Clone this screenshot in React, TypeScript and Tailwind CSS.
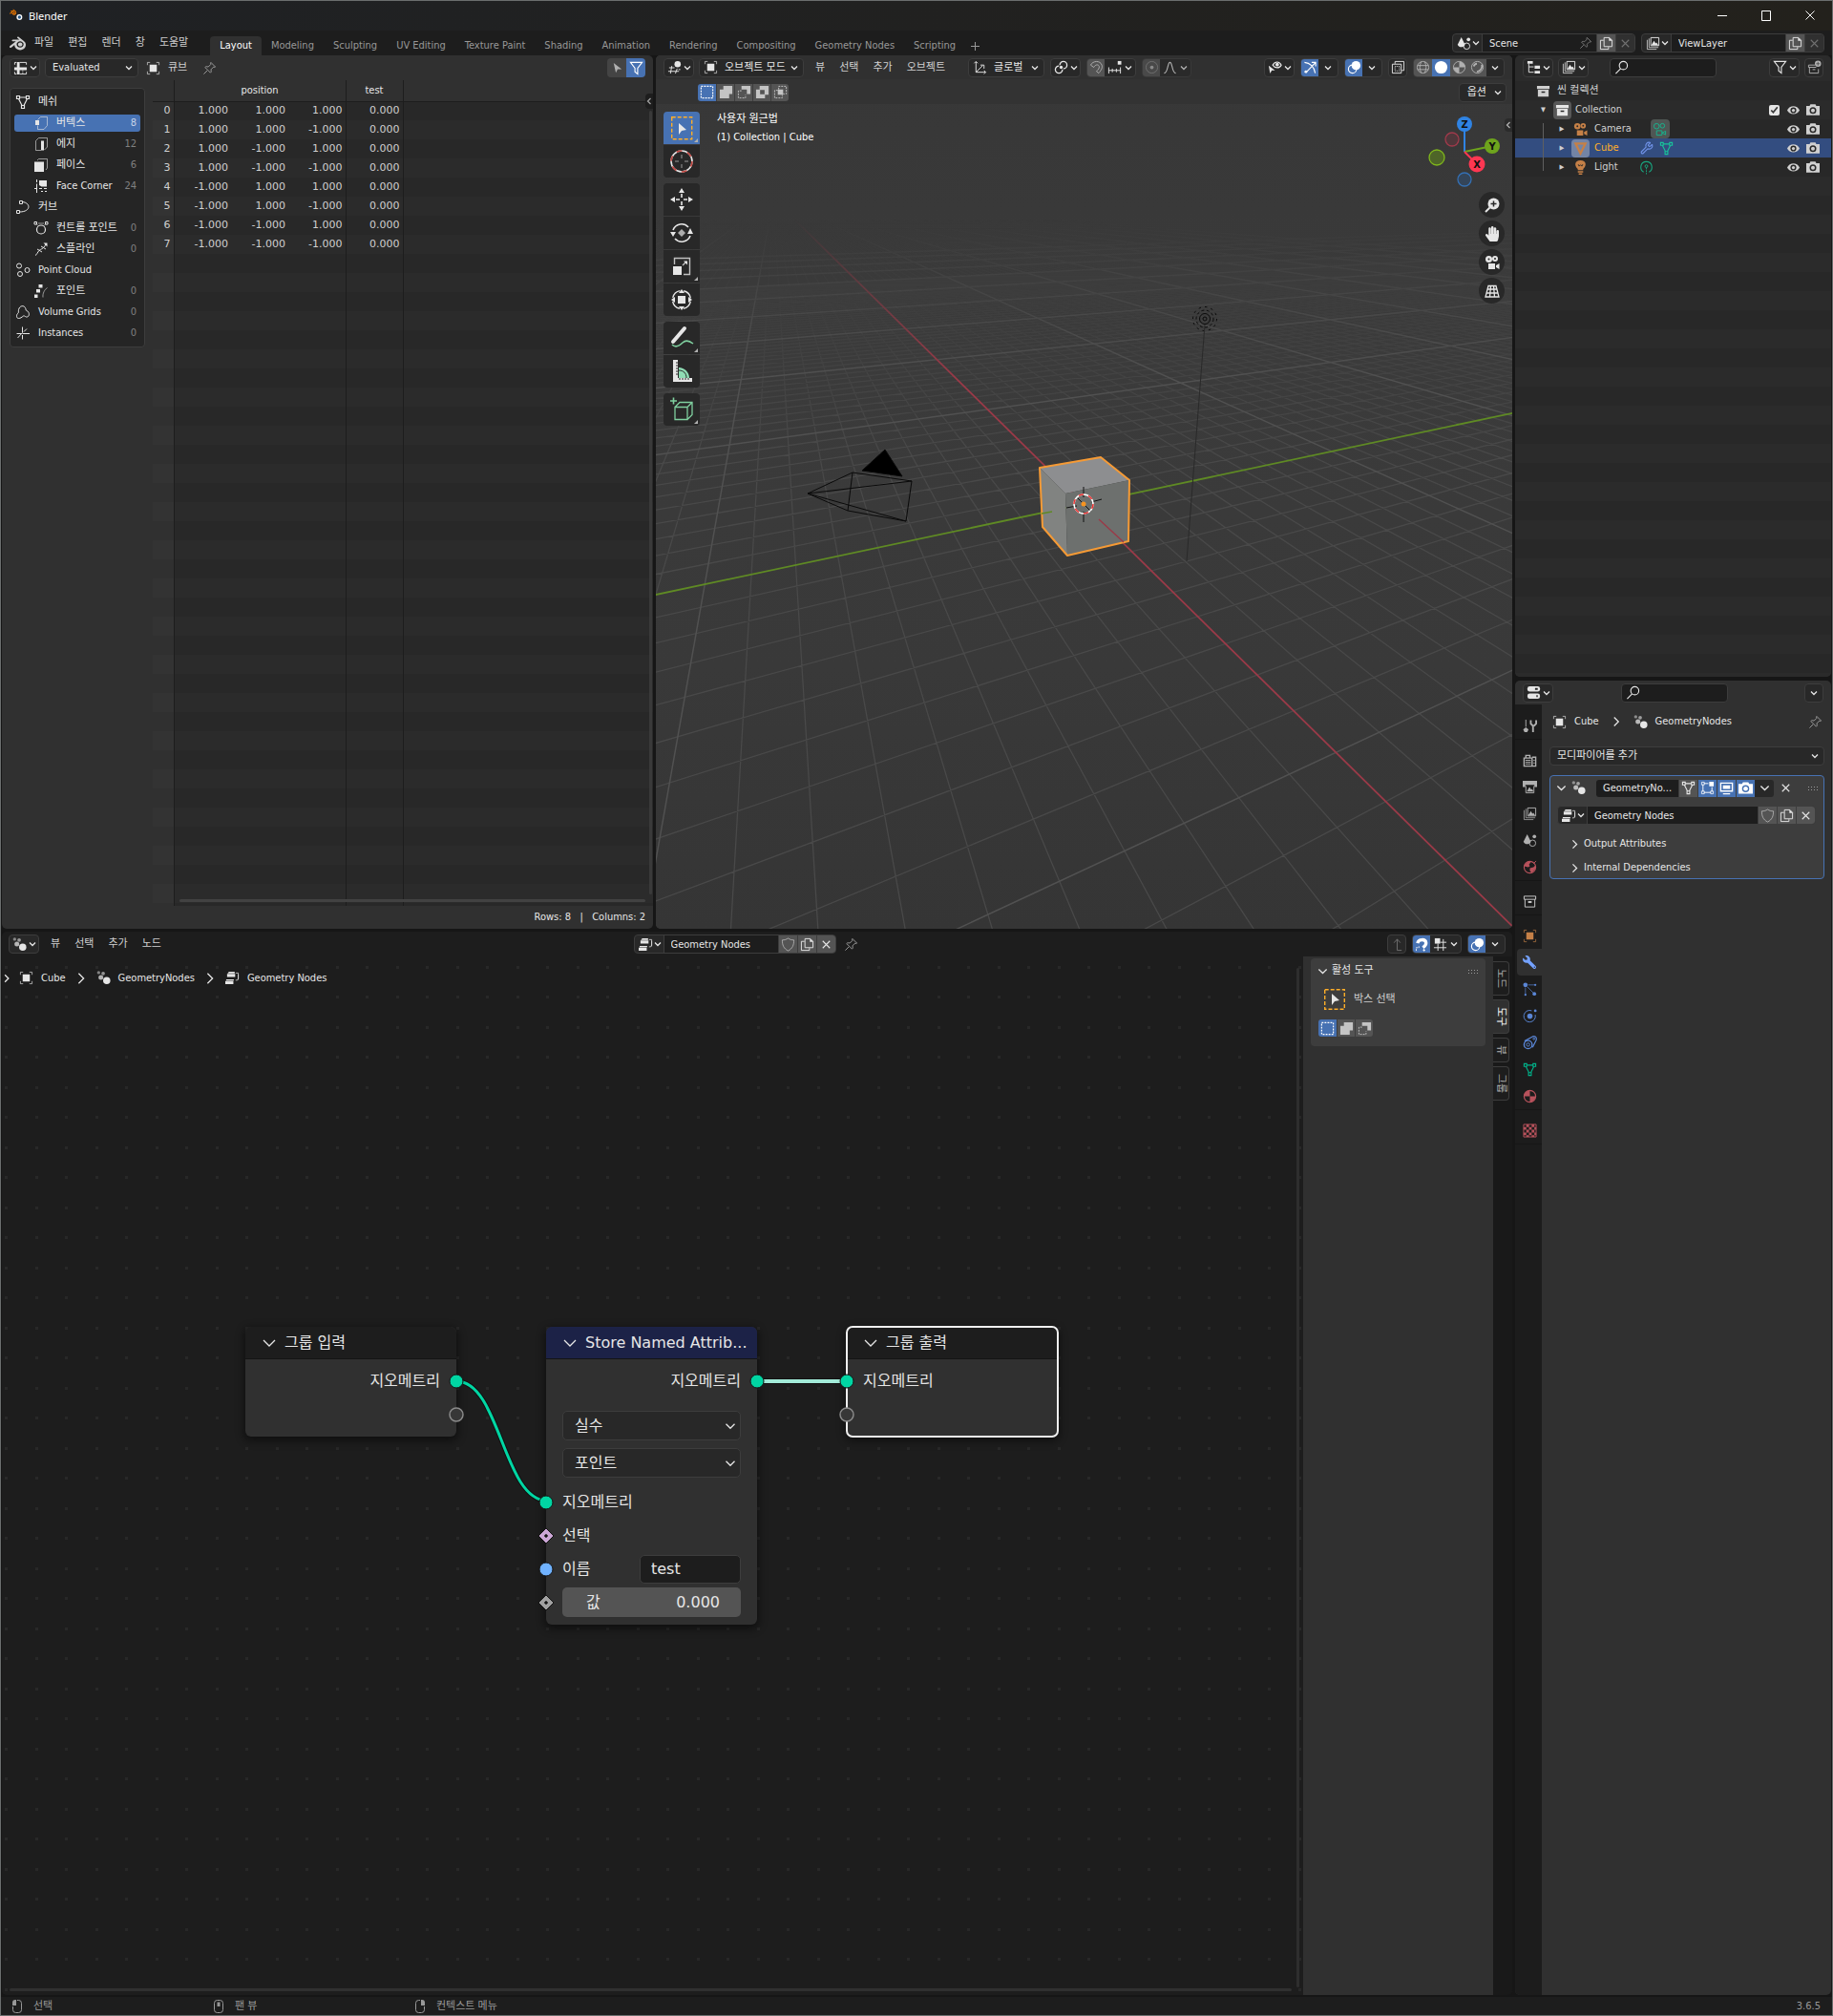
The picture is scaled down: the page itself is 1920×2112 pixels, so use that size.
import type { ReactNode } from "react";
import clsx from "clsx";
import { SiBlender } from "react-icons/si";
import { FaWrench, FaHandPaper } from "react-icons/fa";
import { Wrench } from "lucide-react";

const solid = { fill: "currentColor", stroke: "none" };

const icons: Record<string, ReactNode> = {
    sheet: (
        <>
            <path d="M1.5 4V1.5h2M7 1.5h7.5V4M14.5 12v2.5H7M3.5 14.5h-2V12" />
            <path d="M5.5 1v14M1 8.5h14" strokeWidth="3" />
            <path d="M10.5 9v5" strokeDasharray="1 1" />
        </>
    ),
    object: (
        <>
            <path d="M1.5 4.5v-3h3M11.5 1.5h3v3M14.5 11.5v3h-3M4.5 14.5h-3v-3" opacity=".7" />
            <rect x="4" y="4" width="8" height="8" {...solid} />
        </>
    ),
    pin: <path d="M9.5 1.5l5 5-1 .5-1-.5-3 3c.6 1.6.5 2.8-.5 3.5L3 7c.7-1 2-1.1 3.5-.5l3-3-.5-1zM5.5 10.5l-4 4" />,
    funnel: <path d="M1.5 1.5h13L9.5 8v6.5L6.5 12V8z" strokeWidth="1.2" />,
    cursor: <path d="M4 2l9 7H8.5l-2 4z" {...solid} />,
    mesh: (
        <>
            <path d="M1.5 1.5h3v3h-3zM11.5 1.5h3v3h-3zM6.5 11.5h3v3h-3z" strokeWidth="1.2" />
            <path d="M4.5 3h7M3.5 4.5l3.5 7M12.500 4.5l-3.5 7" strokeWidth="1.2" />
        </>
    ),
    vertex: (
        <>
            <path d="M4.5 4.5l3-3h7v9L11 14.5H4.500v-4" opacity=".6" />
            <rect x="2" y="5" width="4" height="5" {...solid} />
        </>
    ),
    edge: (
        <>
            <path d="M8 14.5H2.5v-10l3-3h9V11l-3 3" opacity=".6" />
            <path d="M9.5 4.5v10" strokeWidth="3" />
        </>
    ),
    face: (
        <>
            <path d="M4 3l1.5-1.5h9V11L13 13" opacity=".6" />
            <rect x="1" y="4.5" width="10" height="10.5" {...solid} />
        </>
    ),
    corner: (
        <>
            <path d="M3.5 1v3M3.5 5.5V15M1 10.5h3M6 10.5h3M11 10.5h3M8 13.5h2M12 13.5h2" />
            <path d="M6 2h8v6.500H8.500L6 7z" {...solid} />
        </>
    ),
    curve: (
        <>
            <path d="M4.5 1.5h3v3h-3zM1.5 11.5h3v3h-3z" />
            <path d="M7.5 2.5c9 1 9 10.500-3 10.500" />
        </>
    ),
    control: (
        <>
            <circle cx="8" cy="9.5" r="4.5" strokeWidth="1.2" />
            <path d="M3 3.5l2 2M13 3.5l-2 2M5 3h6" opacity=".6" />
            <path d="M1 1.5h2.500V4H1zM12.500 1.5H15V4h-2.500z" />
        </>
    ),
    spline: (
        <>
            <path d="M2 14.5c2-1 2-3 4-5s4-1 7-6.500M4 8l5 3M8 5l5 3" />
            <path d="M10.5 1.5h4v4z" {...solid} />
        </>
    ),
    cloud: (
        <>
            <circle cx="4" cy="3.5" r="2.5" />
            <circle cx="12.5" cy="8" r="2.5" />
            <circle cx="5" cy="12" r="2.5" />
        </>
    ),
    points: (
        <>
            <path d="M5.5 1h4v3.500h-4zM3 6h4v3.500H3zM1 11.500h3.500V15H1z" {...solid} />
            <path d="M14.5 4.5c-3 2-5 6-4.500 10" opacity=".6" />
        </>
    ),
    volume: <path d="M3.5 14.5C1 14.5 1 11 2.5 9.5c1.500-1 .5-2 1-4C4.500 1 9 .5 10.500 3.500c1 1.500 0 2.500 1.500 3 3.500 1.500 3 7-.5 6.500-1.500-.5-2-1.500-3-1-2 1.500-3 2.500-5 2.500z" />,
    instances: <path d="M7.5 1.5v6L2.500 13M7.5 8.5H15M7.5 10v4.500M1.5 8.5H6M9 6.500l3-3" />,
    viewport: (
        <>
            <path d="M5 6.500L3.500 15M11 9.500L9 15M2 8.500h6M1 12.500h12" />
            <circle cx="11.5" cy="4.5" r="3.5" {...solid} />
            <path d="M12.5 10.5h2" />
        </>
    ),
    axes: (
        <>
            <path d="M3.5 13.5V2M3.5 13.5H14M3.5 13.500L11 6M1.500 3.500l2-2 2 2M12.500 11.500l2 2-2 2" />
            <path d="M8.5 5.500h4v4" />
        </>
    ),
    pivot: (
        <>
            <path d="M5.500 6.500a4 4 0 1 0 4 4M6.500 5.500a4 4 0 1 1 4 4" strokeWidth="1.400" />
            <circle cx="8" cy="8" r="1.8" {...solid} />
        </>
    ),
    magnet: <path d="M1.500 5.500C4 .5 12 0 14 5.500c1 3-.5 5.500-3.500 9L8 12.500c2-2 3.500-3.500 3-5.500-.7-2.500-4-2.500-6 1z" />,
    magnetOn: (
        <>
            <path d="M3 6.500C4 1.500 12 1.500 12.500 6c.3 2.500-1.500 4-3.500 5.500" strokeWidth="3.500" />
            <path d="M9.500 13.500l1.500 1.500" strokeWidth="2" />
            <path d="M1.500 15v-3.500h3V9" strokeDasharray="2 1" />
        </>
    ),
    increment: (
        <>
            <path d="M1.5 8v7M14.5 8v7M1 11.5h14M5.500 9.500v4M10 9.500v4" />
            <rect x="11.5" y="1" width="4" height="4" {...solid} />
        </>
    ),
    gridSnap: (
        <>
            <path d="M5.500 7v8M11.500 2v13M1 11.500h14M8 5.500h7" />
            <rect x="2" y="1" width="6" height="6" {...solid} />
        </>
    ),
    proportional: (
        <>
            <circle cx="8" cy="8" r="6.5" opacity=".6" />
            <circle cx="8" cy="8" r="2" {...solid} />
        </>
    ),
    falloff: <path d="M1.500 14.500C6 14.500 5 2.500 8 2.500s2 12 6.500 12" strokeWidth="1.200" />,
    visibility: (
        <>
            <path d="M5.500 5.500C8 1 13 1 15 5.500c-2 4-7 4-9.500 0z" strokeWidth="1.300" />
            <circle cx="10.5" cy="5" r="2" {...solid} />
            <path d="M1 6l7 5.500H4.500L2.500 15z" {...solid} />
        </>
    ),
    gizmo: (
        <>
            <path d="M1.500 2.500c6 .5 11 5 12 12M3 14L13.500 3M9.500 2.500H14V7" strokeWidth="1.200" />
            <circle cx="3" cy="13" r="1.5" {...solid} />
        </>
    ),
    overlay: (
        <>
            <circle cx="10" cy="6" r="5" {...solid} />
            <circle cx="6" cy="10" r="4.5" strokeWidth="1.200" />
        </>
    ),
    xray: (
        <>
            <path d="M1.500 4.500h10v10h-10zM4.500 4V1.500h10v10H12" />
            <path d="M4.500 7h5v5h-5z" strokeDasharray="1 1" />
        </>
    ),
    wire: (
        <>
            <circle cx="8" cy="8" r="6.5" />
            <path d="M2 6h12M2 10.500h12M6 2c-2 4-2 8 0 12M10 2c2 4 2 8 0 12" />
        </>
    ),
    solidShade: <circle cx="8" cy="8" r="7" {...solid} />,
    material: (
        <>
            <circle cx="8" cy="8" r="6.5" />
            <path d="M8 1.500V8h6.500C14.500 4 11.500 1.500 8 1.500zM8 8v6.500C5 14.500 2 12 1.500 8z" {...solid} />
        </>
    ),
    materialTab: (
        <>
            <circle cx="8" cy="8" r="6.5" strokeWidth="1.300" />
            <path d="M8 1.500V8H1.500C1.500 4 4.500 1.500 8 1.500zM8 8v6.500c3 0 6-2.500 6.500-6.500z" {...solid} />
        </>
    ),
    rendered: (
        <>
            <circle cx="8" cy="8" r="6.5" />
            <path d="M4 7c.5-2 2-3 3.500-3M13 5c1 4-1.500 7-5.500 8" strokeWidth="2" />
        </>
    ),
    scene: (
        <>
            <path d="M5 1l4 8c0 4-8 4-8 0z" {...solid} />
            <circle cx="11" cy="11" r="3.5" />
            <circle cx="13" cy="3.5" r="2" {...solid} />
        </>
    ),
    layers: (
        <>
            <path d="M1.500 4v10.500H12M3.500 2.500v10H14" opacity=".8" />
            <path d="M5.500 1.500h9v9h-9z" />
            <path d="M6 10l3-5 2 3 1-1 2 3z" {...solid} />
        </>
    ),
    copy: (
        <>
            <path d="M5 4.500H1.500v10h9V12" />
            <path d="M5.500 1.500h6l3 3v7h-9z" />
            <path d="M11 1v4h4z" {...solid} />
        </>
    ),
    close: <path d="M4 4l8 8M12 4l-8 8" strokeWidth="1.200" />,
    outliner: (
        <>
            <path d="M2.500 4v9.500H8M2.500 7.500H8" />
            <path d="M1 1h6v3H1zM9 6h6v3.500H9zM9 12h6v3H9z" {...solid} />
        </>
    ),
    search: (
        <>
            <circle cx="10" cy="6" r="4.5" strokeWidth="1.200" />
            <path d="M7 9.500L1.500 15" strokeWidth="1.200" />
        </>
    ),
    newCollection: (
        <>
            <path d="M1.500 5.500h7M2.500 8v6.500h10V10M1.500 5.500V8H10M6 10.500h3" />
            <circle cx="12" cy="4" r="3.5" {...solid} />
            <path d="M12 2v4M10 4h4" stroke="#545454" />
        </>
    ),
    collection: (
        <>
            <path d="M1 2h14v3.500H1zM2 6.500h12V14H2z" {...solid} />
            <path d="M6 9h4" stroke="#282828" strokeWidth="1.500" />
        </>
    ),
    collectionLine: (
        <>
            <path d="M1.500 2h13v3.500h-13zM2.500 5.500V14h11V5.500" />
            <path d="M6 8.500h4" strokeWidth="2" />
        </>
    ),
    movie: (
        <>
            <circle cx="4.5" cy="4.5" r="3.5" {...solid} />
            <circle cx="11" cy="4" r="3" {...solid} />
            <path d="M4 9h7v6H4zM12 11l3.500-2v6L12 13z" {...solid} />
            <circle cx="4.5" cy="4.5" r="1" fill="#282828" stroke="none" />
            <circle cx="11" cy="4" r="1" fill="#282828" stroke="none" />
        </>
    ),
    movieLine: (
        <>
            <circle cx="4.5" cy="4.5" r="3" />
            <circle cx="11" cy="4" r="2.5" />
            <path d="M4.500 9.500h6v5h-6zM10.500 12l4-2v4z" />
        </>
    ),
    triangle: <path d="M2.500 2.500h11L8 13.500z" strokeWidth="2.500" />,
    bulb: (
        <>
            <path d="M8 0C1 0 1 6.500 5 9.500V11h6V9.500C15 6.500 15 0 8 0zM5 12h6v1.500H5zM6 14.500h4V16H6z" {...solid} />
            <path d="M5.500 4.500l1 2L8 5l1.500 1.500 1-2" stroke="#282828" />
        </>
    ),
    pointLight: (
        <>
            <path d="M5 13C0 10.500 1 1.500 8 1.500s8 9 3 11.500" strokeWidth="1.200" />
            <path d="M8 8v7.500" strokeDasharray="2 1" />
            <circle cx="8" cy="6.5" r="1.5" />
        </>
    ),
    eye: (
        <>
            <path d="M0 8c3-7 13-7 16 0-3 6.500-13 6.500-16 0z" {...solid} />
            <circle cx="8" cy="8" r="3.8" fill="#282828" stroke="none" />
            <circle cx="8" cy="8" r="2" {...solid} />
        </>
    ),
    camera: (
        <>
            <path d="M0 3.500h4l1-2h6l1 2h4v11H0z" {...solid} />
            <circle cx="8" cy="8.8" r="4" fill="#282828" stroke="none" />
            <circle cx="8" cy="8.8" r="2.3" {...solid} />
        </>
    ),
    cameraOn: (
        <>
            <path d="M0 3.500h4l1-2h6l1 2h4v11H0z" {...solid} />
            <circle cx="8" cy="8.8" r="4" fill="#4772b3" stroke="none" />
            <circle cx="8" cy="8.8" r="2.5" {...solid} />
        </>
    ),
    properties: (
        <>
            <rect x="1" y="1" width="14" height="6" rx="2.5" {...solid} />
            <rect x="1" y="9" width="14" height="6" rx="2.5" {...solid} />
            <path d="M9.500 4h3M11 12h1.500" stroke="#282828" strokeWidth="2" />
        </>
    ),
    tool: (
        <>
            <path d="M3.500 1v8" />
            <path d="M9 1.500v4L11.500 8v7M15 1.500v4L12.500 8" strokeWidth="2" />
            <path d="M3.500 9.500L6.500 12 5 15H2l-1.500-3z" {...solid} />
        </>
    ),
    render: (
        <>
            <path d="M1.500 5.500h9v9h-9zM3.500 5V2.500H8V5M10.500 4.500h4v10h-4" strokeWidth="1.500" />
            <path d="M3 8h6M3 10h6M3 12h6M12 8h1.500M12 11h1.500" />
        </>
    ),
    output: (
        <>
            <path d="M0 1h16v7h-3V5.500H3V8H0z" {...solid} />
            <path d="M3.500 7v7.500h9V7" />
            <path d="M4.500 13l3-5 2 3 1-1 1.500 3z" {...solid} />
        </>
    ),
    world: (
        <>
            <circle cx="8" cy="8" r="6.5" strokeWidth="1.200" />
            <path d="M2 5l4-3.500 3 1L7 5l1 2-2 1-4-1zM8 9l4-1 2-2v4l-4 4.500L8 12zM13 2l2-1" {...solid} />
            <path d="M12 4l3-3" />
        </>
    ),
    particles: (
        <>
            <circle cx="3" cy="3" r="2.5" {...solid} />
            <circle cx="14" cy="3" r="1.2" {...solid} />
            <circle cx="3" cy="14" r="1.2" {...solid} />
            <circle cx="13" cy="13" r="2" {...solid} />
            <path d="M6 3h8M3 6v8M5 5l8 8" opacity=".7" />
        </>
    ),
    physics: (
        <>
            <path d="M10 2A6.500 6.500 0 1 0 14 6.500" />
            <circle cx="8" cy="8" r="3" {...solid} />
            <circle cx="14" cy="2" r="1.5" {...solid} />
        </>
    ),
    constraint: (
        <>
            <path d="M2 6l9-5c3-1 5 1 4 4l-4 8" strokeWidth="1.300" />
            <circle cx="6" cy="10" r="4.5" strokeWidth="1.500" />
            <circle cx="6" cy="10" r="1.8" />
            <circle cx="12.5" cy="3.5" r="1" />
        </>
    ),
    texture: (
        <>
            <path d="M1 1h14v14H1z" />
            <path d="M4 1h3v3H4zM10 1h3v3h-3zM1 4h3v3H1zM7 4h3v3H7zM4 7h3v3H4zM10 7h3v3h-3zM1 10h3v3H1zM7 10h3v3H7zM13 4h2v3h-2zM13 10h2v3h-2zM4 13h3v2H4zM10 13h3v2h-3z" {...solid} />
        </>
    ),
    geometry: (
        <>
            <circle cx="2.5" cy="2" r="1.8" opacity=".5" {...solid} />
            <circle cx="7.5" cy="3" r="2" opacity=".6" {...solid} />
            <circle cx="5" cy="7.5" r="2.7" opacity=".75" {...solid} />
            <circle cx="11.5" cy="11" r="4" {...solid} />
        </>
    ),
    nodeTree: (
        <>
            <path d="M4 1h6.500v2H2.500zM2 3.500h9V7H2zM1 9.500h8.500V11H1zM0 11.500h9V15H0z" {...solid} />
            <path d="M11.500 2.500h3v6l-1 2h-2M14.500 4v6" opacity=".8" />
        </>
    ),
    shield: <path d="M8 1c2 1.500 4 2 6.500 2C14.500 8.500 13 12.500 8 15 3 12.500 1.500 8.500 1.500 3 4 3 6 2.500 8 1z" opacity=".6" />,
    editMode: (
        <>
            <path d="M3 4v8M4 13h8M13 7v5M4 3h5" />
            <path d="M1.500 1.500h3v3h-3zM1.500 11.500h3v3h-3zM11.500 11.500h3v3h-3z" opacity=".8" />
            <path d="M10 1h5v5h-5z" {...solid} />
        </>
    ),
    screen: (
        <>
            <path d="M1.500 2.500h13v9h-13zM4 14.500h8" strokeWidth="1.500" />
            <path d="M4 5h8v4H4z" {...solid} />
        </>
    ),
    parent: <path d="M8 14.500h5M8 14.500V2M4.500 6L8 2l3.500 4" />,
    zoom: (
        <>
            <circle cx="9.5" cy="6.5" r="6" {...solid} />
            <path d="M5.500 10.500L1 15" strokeWidth="2" />
            <path d="M9.500 3.500v6M6.500 6.500h6" stroke="#282828" strokeWidth="1.500" />
        </>
    ),
    persp: <path d="M4 2.500h8L15 14H1zM3 6h10M2 10h12M6.500 2.500L5.500 14M9.500 2.500l1 11.500" strokeWidth="1.300" />,
    selNew: <path d="M1.500 1.500h13v13h-13z" strokeDasharray="2 1.250" strokeWidth="1.300" />,
    selAdd: <path d="M5 1h10v9h-3.500v5H1V5h4z" {...solid} />,
    selSub: (
        <>
            <path d="M5 1h10v9h-4V5H5z" {...solid} />
            <path d="M5 6.500H1.500v8h8V11" strokeDasharray="2 1.200" />
        </>
    ),
    selXor: <path fillRule="evenodd" d="M5 1h10v10h-4v4H1V5h4zM5.500 5.500v5h5v-5z" {...solid} />,
    selAnd: (
        <>
            <path d="M1.500 6v8.500H10V11M5 6H1.500M6 5V1.500h8.500V10H11" strokeDasharray="2 1.200" />
            <path d="M5 5h6v6H5z" {...solid} />
        </>
    ),
    mouseLeft: (
        <>
            <path d="M8 1.500h1.500q3 0 3 3v7q0 3-3 3h-3q-3 0-3-3V8" />
            <path d="M3 7V4q0-3 3-3h1v6z" {...solid} />
        </>
    ),
    mouseMid: (
        <>
            <rect x="3.5" y="1.5" width="9" height="13" rx="3" />
            <path d="M6.500 3.500h3V8h-3z" {...solid} />
        </>
    ),
    mouseRight: (
        <>
            <path d="M8 1.500H6.500q-3 0-3 3v7q0 3 3 3h3q3 0 3-3V8" />
            <path d="M13 7V4q0-3-3-3H9v6z" {...solid} />
        </>
    ),
};

function Icon({ name, className = "size-[15px]" }: { name: string; className?: string }) {
    return (
        <svg viewBox="0 0 16 16" fill="none" stroke="currentColor" aria-hidden="true" className={clsx("shrink-0", className)}>
            {icons[name]}
        </svg>
    );
}

function Chevron({ className = "size-2" }: { className?: string }) {
    return (
        <svg viewBox="0 0 8 8" fill="none" stroke="currentColor" strokeWidth="1.3" aria-hidden="true" className={clsx("shrink-0", className)}>
            <path d="M1 2.500l3 3 3-3" vectorEffect="non-scaling-stroke" />
        </svg>
    );
}

const box = "flex h-5 shrink-0 items-center rounded-[4px] border border-[#3d3d3d] bg-[#282828]";

function IconMenu({ icon, label }: { icon: string; label: string }) {
    return (
        <button aria-label={label} className={clsx(box, "w-8 justify-between pr-[2px] pl-[3px]")}>
            <Icon name={icon} />
            <Chevron />
        </button>
    );
}

function Picker({ icon, label, value, className }: { icon?: string; label: string; value: string; className: string }) {
    return (
        <label className={clsx(box, "relative", className)}>
            {icon && <Icon name={icon} className="ml-1 size-[15px]" />}
            <select aria-label={label} className="h-full min-w-0 flex-1 appearance-none bg-transparent pl-[7px] outline-none">
                <option>{value}</option>
            </select>
            <Chevron className="pointer-events-none absolute right-[5px] size-2" />
        </label>
    );
}

type IdFieldProps = { icon: string; label: string; value: string; className: string; buttons: string[]; pin?: boolean };

function IdField({ icon, label, value, className, buttons, pin }: IdFieldProps) {
    return (
        <div className={clsx(box, "overflow-hidden", className)}>
            <button aria-label={`${label} browse`} className="flex h-full w-[30px] shrink-0 items-center justify-between pr-[2px] pl-1">
                <Icon name={icon} />
                <Chevron />
            </button>
            <div className="flex h-full min-w-0 flex-1 items-center border-l border-[#3d3d3d] bg-[#1d1d1d] pr-1">
                <input aria-label={label} defaultValue={value} className="h-full w-full min-w-0 bg-transparent pl-[7px] outline-none" />
                {pin && <Icon name="pin" className="size-[14px] text-[#808080]" />}
            </div>
            {buttons.map((name) => (
                <button
                    key={name}
                    aria-label={`${label} ${name}`}
                    className={clsx(
                        "flex h-full w-5 shrink-0 items-center justify-center border-l border-[#3d3d3d]",
                        pin !== undefined && name === "close" ? "bg-[#303030] text-[#707070]" : "bg-[#545454]",
                    )}
                >
                    <Icon name={name} />
                </button>
            ))}
        </div>
    );
}

function TitleBar() {
    return (
        <header className="flex h-[31px] shrink-0 items-center bg-linear-to-r from-[#1f2124] to-[#23211c] pl-[9px] text-white">
            <svg viewBox="0 0 24 24" className="size-4" aria-hidden="true">
                <SiBlender x="0" y="0" width="24" height="24" color="#ea7600" />
                <circle cx="15.500" cy="13.500" r="4.500" fill="#fff" />
                <circle cx="15.500" cy="13.500" r="2.500" fill="#265787" />
            </svg>
            <h1 className="ml-1 text-[11px] [font-family:'Noto_Sans',sans-serif]">Blender</h1>
            <div className="ml-auto flex">
                {[
                    ["Minimize", "M0 5.500h10"],
                    ["Maximize", "M.5.5h9v10h-9z"],
                    ["Close", "M.5.5l9 9M9.500.5l-9 9"],
                ].map(([label, d]) => (
                    <button key={label} aria-label={label} className="flex h-[30px] w-[46px] items-center justify-center">
                        <svg viewBox="0 0 10 11" className="h-[11px] w-[10px]" fill="none" stroke="currentColor">
                            <path d={d} />
                        </svg>
                    </button>
                ))}
            </div>
        </header>
    );
}

const workspaces = [
    "Layout", "Modeling", "Sculpting", "UV Editing", "Texture Paint", "Shading", "Animation",
    "Rendering", "Compositing", "Geometry Nodes", "Scripting",
];

function TopBar() {
    return (
        <div className="flex h-[26px] shrink-0 bg-[#1d1d1d] pl-[9px]">
            <SiBlender className="mt-[5px] size-[17px] shrink-0 text-[#d0d0d0]" />
            <nav className="ml-[9px] flex gap-[15px] pt-[5px] text-[#d0d0d0]">
                {["파일", "편집", "렌더", "창", "도움말"].map((item) => (
                    <button key={item} className="h-4 whitespace-nowrap">{item}</button>
                ))}
            </nav>
            <div className="ml-[23px] flex pt-[6px]">
                {workspaces.map((name, i) => (
                    <button
                        key={name}
                        className={clsx("h-5 rounded-t-[4px] px-[10px] whitespace-nowrap", i === 0 ? "bg-[#303030] text-white" : "text-[#989898]")}
                    >
                        {name}
                    </button>
                ))}
                <button aria-label="Add workspace" className="px-[6px] text-[#989898]">
                    <svg viewBox="0 0 9 9" className="size-[9px]" stroke="currentColor">
                        <path d="M0 4.500h9M4.500 0v9" />
                    </svg>
                </button>
            </div>
            <div className="ml-auto flex gap-[6px] pt-[3px] pr-2">
                <IdField icon="scene" label="Scene" value="Scene" className="w-[192px]" buttons={["copy", "close"]} pin />
                <IdField icon="layers" label="View layer" value="ViewLayer" className="w-[192px]" buttons={["copy", "close"]} pin={false} />
            </div>
        </div>
    );
}

const datasets = [
    { icon: "mesh", name: "메쉬" },
    { icon: "vertex", name: "버텍스", count: 8, child: true, active: true },
    { icon: "edge", name: "에지", count: 12, child: true },
    { icon: "face", name: "페이스", count: 6, child: true },
    { icon: "corner", name: "Face Corner", count: 24, child: true },
    { icon: "curve", name: "커브" },
    { icon: "control", name: "컨트롤 포인트", count: 0, child: true },
    { icon: "spline", name: "스플라인", count: 0, child: true },
    { icon: "cloud", name: "Point Cloud" },
    { icon: "points", name: "포인트", count: 0, child: true },
    { icon: "volume", name: "Volume Grids", count: 0 },
    { icon: "instances", name: "Instances", count: 0 },
];

const vertices = [
    [1, 1, 1], [1, 1, -1], [1, -1, 1], [1, -1, -1],
    [-1, 1, 1], [-1, 1, -1], [-1, -1, 1], [-1, -1, -1],
];

function Spreadsheet() {
    return (
        <section className="flex min-h-0 flex-col overflow-hidden rounded-[5px] bg-[#303030]">
            <div className="flex h-[26px] shrink-0 items-center px-2">
                <IconMenu icon="sheet" label="Editor type" />
                <Picker label="Object evaluation state" value="Evaluated" className="ml-[5px] w-[98px]" />
                <Icon name="object" className="ml-2 size-[15px]" />
                <span className="ml-2 text-[#d0d0d0]">큐브</span>
                <Icon name="pin" className="ml-4 size-[15px] text-[#a0a0a0]" />
                <div className="ml-auto flex overflow-hidden rounded-[4px]">
                    <button aria-label="Selected only" className="flex size-5 items-center justify-center bg-[#444] text-[#b0b0b0]"><Icon name="cursor" /></button>
                    <button aria-label="Use filter" className="flex size-5 items-center justify-center bg-[#4772b3] text-white"><Icon name="funnel" /></button>
                </div>
            </div>
            <div className="flex min-h-0 flex-1">
                <aside className="w-[158px] shrink-0 px-2 pt-2">
                    <ul className="w-[142px] rounded-[4px] border border-[#3d3d3d] bg-[#252525] px-1 py-[3px]">
                        {datasets.map(({ icon, name, count, child, active }) => (
                            <li key={name} className="flex h-[22px] items-center">
                                <button
                                    className={clsx(
                                        "flex h-[18px] w-full items-center gap-2 rounded-[3px] pr-1 text-left whitespace-nowrap",
                                        child ? "pl-5" : "pl-px",
                                        active && "bg-[#4772b3]",
                                    )}
                                >
                                    <Icon name={icon} className="size-4" />
                                    <span className="flex-1">{name}</span>
                                    {count !== undefined && <span className={active ? "text-[#c8d4e8]" : "text-[#808080]"}>{count}</span>}
                                </button>
                            </li>
                        ))}
                    </ul>
                </aside>
                <div className="relative min-w-0 flex-1">
                    <div className="h-full bg-[repeating-linear-gradient(#282828_0_20px,#2b2b2b_20px_40px)] bg-[position:0_22px]">
                        <table className="h-full w-full table-fixed border-collapse [font-family:'DejaVu_Sans','Noto_Sans_CJK_KR',sans-serif]">
                            <thead className="bg-[#303030] [font-family:'DejaVu_Sans_Condensed','DejaVu_Sans',sans-serif]">
                                <tr className="h-[22px] border-b border-[#1d1d1d]">
                                    <th aria-label="Index" className="w-[22px] border-r border-[#1d1d1d]" />
                                    <th colSpan={3} className="w-[180px] border-r border-[#1d1d1d] font-normal">position</th>
                                    <th className="w-[60px] border-r border-[#1d1d1d] font-normal">test</th>
                                    <th />
                                </tr>
                            </thead>
                            <tbody className="text-right text-[#d0d0d0]">
                                {vertices.map((vertex, row) => (
                                    <tr key={row} className="h-5">
                                        <td className="border-r border-[#1d1d1d] bg-white/4 p-0 pr-[3px]">{row}</td>
                                        {vertex.map((value, axis) => (
                                            <td key={axis} className={clsx("p-0 pr-[3px]", axis === 2 && "border-r border-[#1d1d1d]")}>{value.toFixed(3)}</td>
                                        ))}
                                        <td className="border-r border-[#1d1d1d] p-0 pr-[3px]">0.000</td>
                                        <td />
                                    </tr>
                                ))}
                                <tr>
                                    <td className="border-r border-[#1d1d1d] bg-white/4" />
                                    <td colSpan={3} className="border-r border-[#1d1d1d]" />
                                    <td className="border-r border-[#1d1d1d]" />
                                    <td />
                                </tr>
                            </tbody>
                        </table>
                    </div>
                    <div className="absolute top-[14px] right-0 flex h-4 w-2 items-center rounded-l bg-[#1d1d1d] text-[#a0a0a0]"><Chevron className="size-2 rotate-90" /></div>
                    <div className="absolute top-8 right-px bottom-3 w-[3px] rounded bg-[#3a3a3a]" />
                    <div className="absolute right-2 bottom-1 left-7 h-[3px] rounded bg-[#424242]" />
                </div>
            </div>
            <div className="flex h-6 shrink-0 items-center justify-end pr-2">Rows: 8&nbsp;&nbsp; | &nbsp;&nbsp;Columns: 2</div>
        </section>
    );
}

// camera basis of the orbit view
const right = [0.4209, 0.9071, 0];
const up = [-0.4145, 0.1923, 0.8895];
const back = [0.8069, -0.3744, 0.457];
const focal = 623;
const distance = 17.99;
const center = { x: 448, y: 470 };

const dot = (a: number[], b: number[]) => a[0] * b[0] + a[1] * b[1] + a[2] * b[2];

function project(p: number[]) {
    const scale = focal / (distance - dot(back, p));
    return `${(center.x + dot(right, p) * scale).toFixed(1)} ${(center.y - dot(up, p) * scale).toFixed(1)}`;
}

// floor line at constant x or y, cut just in front of the camera
function floorLine(axis: "x" | "y", k: number) {
    if (axis === "x") {
        const near = Math.max(-300, (back[0] * k + 1 - distance) / -back[1]);
        return `M${project([k, near, 0])}L${project([k, 300, 0])}`;
    }
    const near = Math.min(300, (distance - 1 - back[1] * k) / back[0]);
    return `M${project([-300, k, 0])}L${project([near, k, 0])}`;
}

function floorGrid(step: number, reach: number) {
    let d = "";
    for (let k = -reach; k <= reach; k += step) {
        if (k === 0 || (step === 1 && k % 10 === 0)) continue;
        d += floorLine("x", k) + floorLine("y", k);
    }
    return d;
}

function ViewportScene() {
    return (
        <svg viewBox="0 0 897 915" preserveAspectRatio="xMidYMid slice" className="absolute inset-0 h-full w-full" fill="none" aria-hidden="true">
            <defs>
                <linearGradient id="ground" x1="0" y1="0" x2="0" y2="1">
                    <stop offset="0" stopColor="#373737" />
                    <stop offset=".35" stopColor="#3b3b3b" />
                    <stop offset=".7" stopColor="#393939" />
                    <stop offset="1" stopColor="#353535" />
                </linearGradient>
                <linearGradient id="fineFade" gradientUnits="userSpaceOnUse" x1="0" y1="175" x2="0" y2="420">
                    <stop offset="0" stopColor="#fff" stopOpacity="0" />
                    <stop offset=".4" stopColor="#fff" stopOpacity=".3" />
                    <stop offset="1" stopColor="#fff" />
                </linearGradient>
                <linearGradient id="majorFade" gradientUnits="userSpaceOnUse" x1="0" y1="172" x2="0" y2="340">
                    <stop offset="0" stopColor="#fff" stopOpacity="0" />
                    <stop offset="1" stopColor="#fff" />
                </linearGradient>
                <mask id="fine" maskUnits="userSpaceOnUse" x="0" y="0" width="897" height="915"><rect width="897" height="915" fill="url(#fineFade)" /></mask>
                <mask id="major" maskUnits="userSpaceOnUse" x="0" y="0" width="897" height="915"><rect width="897" height="915" fill="url(#majorFade)" /></mask>
            </defs>
            <rect width="897" height="915" fill="url(#ground)" />
            <g mask="url(#fine)"><path d={floorGrid(1, 60)} stroke="#494949" strokeWidth="1.3" /></g>
            <g mask="url(#major)">
                <path d={floorGrid(10, 100)} stroke="#515151" strokeWidth="1.5" />
                <path d={floorLine("y", 0)} stroke="#9a3a48" strokeWidth="1.8" />
            </g>
            <path d={floorLine("x", 0)} stroke="#5f8a24" strokeWidth="1.8" />

            <g stroke="#0a0a0a">
                <path d="M159 459L206 437 268 446 262 488 201 477zM159 459L268 446M159 459L262 488M206 437L201 477" />
                <path d="M240 413L216 435 258 441z" fill="#000" />
                <circle cx="575" cy="276" r="2" />
                <circle cx="575" cy="276" r="5.5" />
                <circle cx="575" cy="276" r="9" strokeDasharray="3 2.5" />
                <circle cx="575" cy="276" r="12.5" strokeDasharray="2.5 4" />
                <path d="M575 282L556 530" stroke="#2a2a2a" />
            </g>

            <path d="M402 432L466 421 496 445 429 459z" fill="#8d8e90" />
            <path d="M402 432L429 459 431 524 405 494z" fill="#818381" />
            <path d="M429 459L496 445 495 509 431 524z" fill="#6d706e" />
            <path d="M402 432L466 421 496 445 495 509 431 524 405 494z" stroke="#f59a35" strokeWidth="2" strokeLinejoin="round" />
            <path d="M404 480L415 478" stroke="#5f8a24" strokeWidth="1.5" />
            <path d="M464 486L490 510" stroke="#9a3a48" strokeWidth="1.5" />
            <path d="M448 452v11M448 478v11M430 474l11-2M456 468l11-3M442 464l14 14" stroke="#111" />
            <circle cx="448" cy="470" r="10" stroke="#fff" strokeWidth="1.5" />
            <circle cx="448" cy="470" r="10" stroke="#e33" strokeWidth="1.5" strokeDasharray="5.2 5.2" />
            <circle cx="448" cy="470" r="2.5" fill="#f79421" />
        </svg>
    );
}

const toolGroups: { label: string; active?: boolean; more?: boolean; drawing: ReactNode }[][] = [
    [
        {
            label: "Select box", active: true, more: true,
            drawing: (
                <>
                    <path d="M3.700 2.700h21v23h-21z" stroke="#ffae29" strokeWidth="1.4" strokeDasharray="4 2" />
                    <path d="M11 9l8 7-5 1-3 4z" fill="currentColor" stroke="none" />
                </>
            ),
        },
        {
            label: "Cursor",
            drawing: (
                <>
                    <circle cx="14" cy="14" r="11" strokeWidth="1.6" />
                    <circle cx="14" cy="14" r="11" stroke="#c0443f" strokeWidth="1.6" strokeDasharray="5.76 5.76" />
                    <path d="M14 7v4M14 17v4M7 14h4M17 14h4" opacity=".6" />
                </>
            ),
        },
    ],
    [
        {
            label: "Move",
            drawing: (
                <>
                    <path d="M14 2l3 5h-6zM14 26l3-5h-6zM2 14l5-3v6zM26 14l-5-3v6z" fill="currentColor" stroke="none" />
                    <path d="M14 8v4M14 16v4M8 14h4M16 14h4" strokeWidth="1.6" />
                </>
            ),
        },
        {
            label: "Rotate",
            drawing: (
                <>
                    <path d="M5 11a9.500 9.500 0 0 1 16-3M23 17a9.500 9.500 0 0 1-16 3" strokeWidth="1.6" />
                    <path d="M2 13h6l-3 5zM20 15h6l-3-6z" fill="currentColor" stroke="none" />
                    <path d="M14 10l4 4-4 4-4-4z" fill="currentColor" opacity=".7" stroke="none" />
                </>
            ),
        },
        {
            label: "Scale", more: true,
            drawing: (
                <>
                    <path d="M6.500 12V5.500h16v17H16M15 13l4-4" opacity=".8" strokeWidth="1.4" />
                    <path d="M16 8.500h4v4z" fill="currentColor" stroke="none" />
                    <path d="M5 14h9v9H5z" fill="currentColor" stroke="none" />
                </>
            ),
        },
        {
            label: "Transform",
            drawing: (
                <>
                    <circle cx="14" cy="14" r="9.5" strokeWidth="1.4" strokeDasharray="10.9 4" strokeDashoffset="-2" />
                    <path d="M10 10h8v8h-8z" fill="currentColor" stroke="none" />
                    <path d="M14 3l3 4h-6zM14 25l3-4h-6zM3 14l4-3v6zM25 14l-4-3v6z" fill="currentColor" stroke="none" />
                </>
            ),
        },
    ],
    [
        {
            label: "Annotate", more: true,
            drawing: (
                <>
                    <path d="M5 18L17 4" strokeWidth="4" strokeLinecap="round" />
                    <path d="M4 21c4 4 8 1 11-2s6-3 11 1" stroke="#7fcf9f" strokeWidth="1.6" />
                </>
            ),
        },
        {
            label: "Measure",
            drawing: (
                <>
                    <path d="M11 10c6 0 11 5 11 11H11z" fill="#8fdcb4" stroke="none" />
                    <path d="M11 13c5 0 8 3 8 8" stroke="#282828" />
                    <path d="M5 2h5v19h15v4H5z" fill="currentColor" stroke="none" />
                    <path d="M8 5h2M8 8h2M8 11h2M8 14h2M8 17h2M12 21v2M15 21v2M18 21v2M21 21v2" stroke="#282828" />
                </>
            ),
        },
    ],
    [
        {
            label: "Add cube", more: true,
            drawing: (
                <g stroke="#7fcf9f">
                    <path d="M7 11.500h13v13H7zM7 11.500l5-5h13v13l-5 5M20 11.500l5-5" strokeWidth="1.3" />
                    <path d="M5.500 1.500v7M2 5h7" strokeWidth="1.6" />
                </g>
            ),
        },
    ],
];

function SelectModes({ names }: { names: string[] }) {
    return (
        <div className="flex overflow-hidden rounded-[3px]">
            {names.map((name, i) => (
                <button
                    key={name}
                    aria-label={name}
                    className={clsx("flex h-[18px] w-[19px] items-center justify-center", i === 0 ? "bg-[#4772b3] text-white" : "border-l border-[#3d3d3d] bg-[#545454] text-[#c4c4c4]")}
                >
                    <Icon name={name} />
                </button>
            ))}
        </div>
    );
}

function SplitToggle({ icon, menuIcon, label, on }: { icon: string; menuIcon?: string; label: string; on?: boolean }) {
    return (
        <div className={clsx(box, "overflow-hidden")}>
            <button aria-label={label} className={clsx("flex h-full w-[18px] items-center justify-center", on ? "bg-[#4772b3] text-white" : "bg-[#545454] text-[#b0b0b0]")}>
                <Icon name={icon} />
            </button>
            <button aria-label={`${label} options`} className={clsx("flex h-full items-center justify-center", menuIcon ? "w-8 gap-[3px]" : "w-5")}>
                {menuIcon && <Icon name={menuIcon} />}
                <Chevron />
            </button>
        </div>
    );
}

function AxisGizmo() {
    return (
        <svg viewBox="0 0 84 84" className="size-[84px]" strokeWidth="2" role="img" aria-label="View axes">
            <path d="M42 42V13" stroke="#2f83e3" />
            <path d="M42 42L71 36" stroke="#6ea41d" />
            <path d="M42 42L55 55" stroke="#fd3752" />
            <circle cx="29" cy="29" r="7" fill="#4f373b" stroke="#a03a4b" strokeWidth="1.3" />
            <circle cx="13" cy="48" r="8" fill="#4e6528" stroke="#7fb61c" strokeWidth="1.3" />
            <circle cx="42" cy="71" r="7" fill="#344559" stroke="#3470b4" strokeWidth="1.3" />
            <circle cx="42" cy="13" r="8" fill="#2f83e3" />
            <circle cx="71" cy="36" r="8" fill="#6ea41d" />
            <circle cx="55" cy="55" r="8.5" fill="#fd3752" />
            <g className="text-[11px] font-bold" textAnchor="middle" fill="#101010">
                <text x="42" y="17">Z</text>
                <text x="71" y="40">Y</text>
                <text x="55" y="59">X</text>
            </g>
        </svg>
    );
}

const navButtons = [
    { label: "Zoom", icon: <Icon name="zoom" className="size-4" /> },
    { label: "Pan", icon: <FaHandPaper className="size-4" /> },
    { label: "Camera view", icon: <Icon name="movie" className="size-4" /> },
    { label: "Perspective", icon: <Icon name="persp" className="size-4" /> },
];

function Viewport() {
    return (
        <section className="relative flex min-h-0 flex-col overflow-hidden rounded-[5px] bg-[#393939]">
            <ViewportScene />
            <div className="relative flex h-[25px] shrink-0 items-center bg-[#303030] px-2">
                <IconMenu icon="viewport" label="Editor type" />
                <Picker icon="object" label="Mode" value="오브젝트 모드" className="ml-[5px] w-[110px]" />
                <nav className="ml-3 flex gap-[15px] text-[#d0d0d0]">
                    {["뷰", "선택", "추가", "오브젝트"].map((item) => <button key={item} className="whitespace-nowrap">{item}</button>)}
                </nav>
                <Picker icon="axes" label="Transform orientation" value="글로벌" className="ml-6 w-20" />
                <div className="ml-[6px] flex gap-[6px]">
                    <IconMenu icon="pivot" label="Pivot point" />
                    <SplitToggle icon="magnet" menuIcon="increment" label="Snap" />
                    <div className="opacity-70"><SplitToggle icon="proportional" menuIcon="falloff" label="Proportional editing" /></div>
                </div>
                <div className="ml-auto flex gap-[6px]">
                    <IconMenu icon="visibility" label="Visibility" />
                    <SplitToggle icon="gizmo" label="Gizmos" on />
                    <SplitToggle icon="overlay" label="Overlays" on />
                    <button aria-label="Toggle X-Ray" className={clsx(box, "w-5 justify-center")}><Icon name="xray" /></button>
                    <div className={clsx(box, "overflow-hidden")}>
                        {["wire", "solidShade", "material", "rendered"].map((name) => (
                            <button
                                key={name}
                                aria-label={name}
                                className={clsx("flex h-full w-[19px] items-center justify-center", name === "solidShade" ? "bg-[#4772b3] text-white" : "bg-[#545454] text-[#b0b0b0]")}
                            >
                                <Icon name={name} />
                            </button>
                        ))}
                        <button aria-label="Shading options" className="flex h-full w-[18px] items-center justify-center"><Chevron /></button>
                    </div>
                </div>
            </div>
            <div className="relative flex h-[26px] shrink-0 items-center justify-between bg-[#333] pt-px pr-[6px] pl-11">
                <SelectModes names={["selNew", "selAdd", "selSub", "selXor", "selAnd"]} />
                <button className={clsx(box, "gap-2 pr-1 pl-2")}>옵션 <Chevron /></button>
            </div>
            <div className="relative flex flex-1 items-start pl-2">
                <div className="flex flex-col gap-[6px] pt-2">
                    {toolGroups.map((tools) => (
                        <div key={tools[0].label} className="flex flex-col gap-px overflow-hidden rounded-[4px]">
                            {tools.map(({ label, active, more, drawing }) => (
                                <button key={label} aria-label={label} className={clsx("relative flex h-[34px] w-[38px] items-center justify-center", active ? "bg-[#4772b3]" : "bg-[#282828]")}>
                                    <svg viewBox="0 0 28 28" className="size-7" fill="none" stroke="currentColor">{drawing}</svg>
                                    {more && (
                                        <svg viewBox="0 0 4 4" className="absolute right-[2px] bottom-[2px] size-1 text-[#b0b0b0]"><path d="M4 0v4H0z" fill="currentColor" /></svg>
                                    )}
                                </button>
                            ))}
                        </div>
                    ))}
                </div>
                <div className="pt-[6px] pl-[18px] leading-[19px] text-white">
                    <p>사용자 원근법</p>
                    <p>(1) Collection | Cube</p>
                </div>
                <div className="ml-auto flex flex-col items-end pt-2 pr-2">
                    <AxisGizmo />
                    <div className="flex flex-col gap-[3px]">
                        {navButtons.map(({ label, icon }) => (
                            <button key={label} aria-label={label} className="flex size-[27px] items-center justify-center rounded-full bg-[#282828]">{icon}</button>
                        ))}
                    </div>
                </div>
                <div className="absolute top-[15px] right-0 flex h-[14px] w-2 items-center rounded-l bg-[#2b2b2b] text-[#b0b0b0]"><Chevron className="size-2 rotate-90" /></div>
            </div>
        </section>
    );
}

const outlinerObjects = [
    { name: "Camera", icon: "movie", data: <span className="ml-5 flex size-5 items-center justify-center rounded-[4px] bg-[#4f5654] text-[#16b48e]"><Icon name="movieLine" /></span> },
    {
        name: "Cube", icon: "triangle", active: true,
        data: (
            <span className="ml-[22px] flex items-center gap-[6px] text-[#18c49a]">
                <Wrench className="size-[14px] text-[#6f91e6]" strokeWidth={2} />
                <Icon name="mesh" />
            </span>
        ),
    },
    { name: "Light", icon: "bulb", data: <span className="ml-[22px] text-[#18a57f]"><Icon name="pointLight" /></span> },
];

function RowToggles({ name }: { name: string }) {
    return (
        <>
            <button aria-label={`Hide ${name}`} className="ml-2"><Icon name="eye" className="size-[13px]" /></button>
            <button aria-label={`Disable ${name} in renders`} className="mr-3 ml-[7px]"><Icon name="camera" className="size-[14px]" /></button>
        </>
    );
}

function SearchField({ label, className }: { label: string; className: string }) {
    return (
        <label className={clsx("flex h-5 items-center rounded-[4px] border border-[#3d3d3d] bg-[#1d1d1d] pl-1", className)}>
            <Icon name="search" />
            <input type="search" aria-label={label} className="w-full min-w-0 bg-transparent outline-none" />
        </label>
    );
}

function Outliner() {
    return (
        <section className="flex min-h-0 flex-[651] flex-col overflow-hidden rounded-[5px] bg-[#2b2b2b]">
            <div className="flex h-[27px] shrink-0 items-center px-2 pb-[2px]">
                <IconMenu icon="outliner" label="Editor type" />
                <div className="ml-[5px]"><IconMenu icon="layers" label="Display mode" /></div>
                <SearchField label="Filter objects" className="ml-[22px] w-28" />
                <div className="ml-auto"><IconMenu icon="funnel" label="Filter" /></div>
                <button aria-label="New collection" className={clsx(box, "ml-[5px] w-5 justify-center text-[#b0b0b0]")}><Icon name="newCollection" /></button>
            </div>
            <div className="relative flex-1 bg-[repeating-linear-gradient(#282828_0_20px,#2b2b2b_20px_40px)] text-[#d0d0d0]">
                <div className="flex h-5 items-center pl-[22px]">
                    <Icon name="collection" />
                    <span className="ml-[7px]">씬 컬렉션</span>
                </div>
                <div className="flex h-5 items-center pl-[26px]">
                    <button aria-label="Collapse Collection" className="w-[7px] text-[7px] leading-none">▼</button>
                    <span className="ml-[7px] flex size-[19px] items-center justify-center rounded-[4px] bg-[#585858] text-[#e6e6e6]"><Icon name="collection" /></span>
                    <span className="ml-1">Collection</span>
                    <input type="checkbox" aria-label="Include Collection" defaultChecked className="mr-0 ml-auto size-[11px] accent-[#e6e6e6]" />
                    <RowToggles name="Collection" />
                </div>
                {outlinerObjects.map(({ name, icon, active, data }) => (
                    <div key={name} className={clsx("flex h-5 items-center pl-[45px]", active && "bg-[#334d80]")}>
                        <button aria-label={`Expand ${name}`} className="w-2 text-[7px] leading-none">▶</button>
                        <span className={clsx("ml-[6px] flex size-[19px] items-center justify-center rounded-[4px] text-[#c58047]", active && "bg-[#7384a5]")}><Icon name={icon} /></span>
                        <span className={clsx("ml-[5px]", active && "text-[#ffaf29]")}>{name}</span>
                        {data}
                        <span className="ml-auto" />
                        <RowToggles name={name} />
                    </div>
                ))}
                <div className="absolute top-[44px] left-[29px] h-[50px] w-px bg-[#606060]" />
            </div>
        </section>
    );
}

const propertyTabs = [
    [{ name: "tool", color: "text-[#b0b0b0]" }],
    [
        { name: "render", color: "text-[#b0b0b0]" },
        { name: "output", color: "text-[#b0b0b0]" },
        { name: "layers", color: "text-[#b0b0b0]" },
        { name: "scene", color: "text-[#b0b0b0]" },
        { name: "world", color: "text-[#b8525c]" },
    ],
    [{ name: "collectionLine", color: "text-[#d0d0d0]" }],
    [
        { name: "object", color: "text-[#c58047]" },
        { name: "modifiers", color: "text-[#74a2ff]" },
        { name: "particles", color: "text-[#5a86d6]" },
        { name: "physics", color: "text-[#5a86d6]" },
        { name: "constraint", color: "text-[#5a86d6]" },
        { name: "mesh", color: "text-[#00b38a]" },
        { name: "materialTab", color: "text-[#b8525c]" },
    ],
    [{ name: "texture", color: "text-[#b8525c]" }],
];

function Grip() {
    return (
        <svg viewBox="0 0 11 5" className="h-[5px] w-[11px] shrink-0" stroke="#989898" aria-hidden="true">
            <path d="M0 1.500h11M0 4.500h11" strokeDasharray="1 2" />
        </svg>
    );
}

function Properties() {
    return (
        <section className="flex min-h-0 flex-[1377] flex-col overflow-hidden rounded-[5px] bg-[#303030]">
            <div className="flex h-[25px] shrink-0 items-center px-2">
                <IconMenu icon="properties" label="Editor type" />
                <SearchField label="Search properties" className="mr-auto ml-[71px] w-28" />
                <button aria-label="Options" className={clsx(box, "w-5 justify-center")}><Chevron /></button>
            </div>
            <div className="flex min-h-0 flex-1">
                <nav className="flex w-7 shrink-0 flex-col bg-[#1c1c1c] pt-2">
                    {propertyTabs.map((tabs, i) => (
                        <div key={i} className="mb-[7px] flex flex-col border-b border-[#161616] pl-[2px]">
                            {tabs.map(({ name, color }) => (
                                <button
                                    key={name}
                                    aria-label={name}
                                    className={clsx("flex h-7 items-center justify-center rounded-l-[4px]", color, name === "modifiers" && "bg-[#303030]")}
                                >
                                    {name === "modifiers" ? <FaWrench className="size-[14px] -scale-x-100" /> : <Icon name={name} />}
                                </button>
                            ))}
                        </div>
                    ))}
                </nav>
                <div className="min-w-0 flex-1 pr-[7px] pl-2">
                    <div className="flex h-9 items-center pl-[3px]">
                        <Icon name="object" />
                        <span className="ml-2">Cube</span>
                        <Chevron className="mx-3 size-3 -rotate-90" />
                        <Icon name="geometry" />
                        <span className="ml-2">GeometryNodes</span>
                        <Icon name="pin" className="mr-[2px] ml-auto size-[15px] text-[#a0a0a0]" />
                    </div>
                    <Picker label="Add modifier" value="모디파이어를 추가" className="mt-2" />
                    <div className="mt-[10px] rounded-[4px] border border-[#4772b3] bg-[#3d3d3d] pb-px">
                        <div className="flex h-[25px] items-center pl-[6px]">
                            <button aria-label="Collapse GeometryNodes"><Chevron className="size-[11px]" /></button>
                            <Icon name="geometry" className="ml-[5px] size-[15px]" />
                            <div className="ml-[10px] flex h-5 min-w-0 flex-1 overflow-hidden rounded-[4px] border border-[#3d3d3d]">
                                <input aria-label="Modifier name" defaultValue="GeometryNo..." className="h-full min-w-0 flex-1 bg-[#1d1d1d] pl-[7px] outline-none" />
                                {["mesh", "editMode", "screen", "cameraOn"].map((name, i) => (
                                    <button key={name} aria-label={name} className={clsx("flex h-full w-5 shrink-0 items-center justify-center border-l border-[#3d3d3d]", i ? "bg-[#4772b3] text-white" : "bg-[#545454]")}>
                                        <Icon name={name} />
                                    </button>
                                ))}
                                <button aria-label="Modifier options" className="flex h-full w-5 shrink-0 items-center justify-center bg-[#282828]"><Chevron className="size-[11px]" /></button>
                            </div>
                            <button aria-label="Remove modifier" className="ml-1"><Icon name="close" /></button>
                            <div className="mr-[5px] ml-4"><Grip /></div>
                        </div>
                        <IdField icon="nodeTree" label="Node group" value="Geometry Nodes" className="mt-[6px] mr-2 ml-[7px]" buttons={["shield", "copy", "close"]} />
                        <div className="flex flex-col gap-[9px] pt-3 pb-[2px] pl-5">
                            {["Output Attributes", "Internal Dependencies"].map((name) => (
                                <button key={name} className="flex h-4 items-center gap-1">
                                    <Chevron className="size-[11px] -rotate-90" />
                                    {name}
                                </button>
                            ))}
                        </div>
                    </div>
                </div>
            </div>
        </section>
    );
}

function Socket({ side, kind }: { side: "left" | "right"; kind: "geometry" | "string" | "virtual" | "boolean" | "value" }) {
    const place = side === "left" ? "-left-2" : "-right-2";
    return (
        <svg viewBox="0 0 16 16" className={clsx("absolute top-1/2 size-4 -translate-y-1/2", place)} stroke="#141414" aria-hidden="true">
            {kind === "geometry" && <circle cx="8" cy="8" r="7" fill="#00d6a3" />}
            {kind === "string" && <circle cx="8" cy="8" r="7" fill="#70b2ff" />}
            {kind === "virtual" && <circle cx="8" cy="8" r="7" fill="#373737" stroke="#8a8a8a" strokeWidth="1.5" />}
            {(kind === "boolean" || kind === "value") && (
                <>
                    <path d="M8 0l8 8-8 8-8-8z" fill={kind === "boolean" ? "#cca6d6" : "#a1a1a1"} />
                    <circle cx="8" cy="8" r="1.3" fill="#141414" />
                </>
            )}
        </svg>
    );
}

function Node({ title, className, headerClass, children }: { title: string; className: string; headerClass: string; children: ReactNode }) {
    return (
        <article className={clsx("absolute w-[221px] rounded-[6px] bg-[#303030] text-[16px] leading-5 shadow-[0_3px_8px_2px_rgba(0,0,0,0.45)] [font-family:'DejaVu_Sans','Noto_Sans_CJK_KR',sans-serif]", className)}>
            <h2 className={clsx("flex h-[34px] items-center gap-2 rounded-t-[6px] border-b border-[#141414] pl-[17px] whitespace-nowrap", headerClass)}>
                <button aria-label={`Collapse ${title}`}><Chevron className="size-4" /></button>
                {title}
            </h2>
            <div className="pt-[5px] pb-[6px]">{children}</div>
        </article>
    );
}

function NodeRow({ children, align = "left" }: { children?: ReactNode; align?: "left" | "right" }) {
    return <div className={clsx("relative flex h-[35px] items-center px-[17px]", align === "right" && "justify-end")}>{children}</div>;
}

function NodeSelect({ label, value }: { label: string; value: string }) {
    return (
        <label className="relative mx-[17px] mb-2 flex h-[31px] items-center rounded-[5px] border border-[#3d3d3d] bg-[#282828]">
            <select aria-label={label} className="h-full w-full appearance-none bg-transparent pl-3 outline-none">
                <option>{value}</option>
            </select>
            <Chevron className="pointer-events-none absolute right-1 size-3" />
        </label>
    );
}

function NodeCanvas() {
    return (
        <div className="relative min-w-0 flex-1 overflow-hidden bg-[#1d1d1d]">
            <svg className="absolute inset-0 h-full w-full" fill="none" aria-hidden="true">
                <defs>
                    <pattern id="dots" width="63" height="63" patternUnits="userSpaceOnUse">
                        <path d="M3 10h3v3H3zM35 10h3v3h-3zM3 41h3v3H3zM35 41h3v3h-3z" fill="#282828" />
                    </pattern>
                </defs>
                <rect width="100%" height="100%" fill="url(#dots)" />
                <path d="M476 445C522 445 525 570 571 570" stroke="#111" strokeWidth="5" />
                <path d="M476 445C522 445 525 570 571 570" stroke="#00d6a3" strokeWidth="3" />
                <path d="M791 445H885" stroke="#111" strokeWidth="6" />
                <path d="M791 445H885" stroke="#a3ebd9" strokeWidth="4" />
            </svg>
            <div className="relative flex h-[45px] items-center gap-2">
                <Chevron className="size-[10px] -rotate-90" />
                <Icon name="object" />
                <span>Cube</span>
                <Chevron className="mx-px size-[14px] -rotate-90" />
                <Icon name="geometry" />
                <span>GeometryNodes</span>
                <Chevron className="mx-px size-[14px] -rotate-90" />
                <Icon name="nodeTree" />
                <span>Geometry Nodes</span>
            </div>
            <Node title="그룹 입력" className="top-[388px] left-[255px]" headerClass="bg-[#1d1d1d]">
                <NodeRow align="right">지오메트리<Socket side="right" kind="geometry" /></NodeRow>
                <NodeRow><Socket side="right" kind="virtual" /></NodeRow>
            </Node>
            <Node title="Store Named Attrib..." className="top-[388px] left-[570px]" headerClass="bg-[#1c2247]">
                <NodeRow align="right">지오메트리<Socket side="right" kind="geometry" /></NodeRow>
                <div className="mt-[14px]">
                    <NodeSelect label="Data type" value="실수" />
                    <NodeSelect label="Domain" value="포인트" />
                </div>
                <NodeRow>지오메트리<Socket side="left" kind="geometry" /></NodeRow>
                <NodeRow>선택<Socket side="left" kind="boolean" /></NodeRow>
                <NodeRow>
                    <label htmlFor="attribute-name" className="flex-1">이름</label>
                    <input id="attribute-name" defaultValue="test" className="h-[30px] w-[106px] rounded-[5px] border border-[#3d3d3d] bg-[#1d1d1d] pl-[11px] outline-none" />
                    <Socket side="left" kind="string" />
                </NodeRow>
                <NodeRow>
                    <div className="flex h-[31px] w-full items-center rounded-[5px] bg-[#545454] pr-[22px] pl-[25px]">
                        <label htmlFor="attribute-value">값</label>
                        <input id="attribute-value" defaultValue="0.000" className="ml-auto w-20 bg-transparent text-right outline-none" />
                    </div>
                    <Socket side="left" kind="value" />
                </NodeRow>
            </Node>
            <Node title="그룹 출력" className="top-[388px] left-[885px] outline-2 -outline-offset-1 outline-[#efefef]" headerClass="bg-[#1d1d1d]">
                <NodeRow>지오메트리<Socket side="left" kind="geometry" /></NodeRow>
                <NodeRow><Socket side="left" kind="virtual" /></NodeRow>
            </Node>
            <div className="absolute top-3 right-1 bottom-2 w-[3px] rounded bg-[#2e2e2e]" />
            <div className="absolute right-3 bottom-1 left-2 h-[3px] rounded bg-[#303030]" />
        </div>
    );
}

function NodeEditor() {
    return (
        <section className="col-span-2 flex min-h-0 flex-col overflow-hidden rounded-[5px] bg-[#1d1d1d]">
            <div className="grid h-[26px] shrink-0 grid-cols-[1fr_auto_1fr] items-center px-[7px]">
                <div className="flex items-center">
                    <IconMenu icon="geometry" label="Editor type" />
                    <nav className="ml-3 flex gap-[15px] text-[#d0d0d0]">
                        {["뷰", "선택", "추가", "노드"].map((item) => <button key={item}>{item}</button>)}
                    </nav>
                </div>
                <div className="flex items-center gap-2 pr-6">
                    <IdField icon="nodeTree" label="Node tree" value="Geometry Nodes" className="w-[212px]" buttons={["shield", "copy", "close"]} />
                    <Icon name="pin" className="size-[15px] text-[#a0a0a0]" />
                </div>
                <div className="flex items-center justify-end gap-[6px]">
                    <button aria-label="Parent node tree" className={clsx(box, "w-5 justify-center text-[#707070]")}><Icon name="parent" /></button>
                    <SplitToggle icon="magnetOn" menuIcon="gridSnap" label="Snap" on />
                    <SplitToggle icon="overlay" label="Overlays" on />
                </div>
            </div>
            <div className="flex min-h-0 flex-1">
                <NodeCanvas />
                <aside className="w-[199px] shrink-0 bg-[#303030] px-2 pt-[2px]">
                    <div className="h-[92px] rounded-[4px] bg-[#3d3d3d]">
                        <div className="flex h-[26px] items-center px-[7px]">
                            <Chevron className="size-[11px]" />
                            <h2 className="ml-1 flex-1">활성 도구</h2>
                            <Grip />
                        </div>
                        <div className="flex h-[34px] items-center pl-[14px]">
                            <svg viewBox="0 0 22 22" className="size-[22px]" fill="none" aria-hidden="true">
                                <path d="M.7.7h20.600v20.600H.7z" stroke="#ffae29" strokeWidth="1.4" strokeDasharray="4 2" />
                                <path d="M8 5l8 7-5 1-3 4z" fill="#e6e6e6" />
                            </svg>
                            <span className="ml-[9px] text-[#d0d0d0]">박스 선택</span>
                        </div>
                        <div className="mt-1 ml-2 w-fit"><SelectModes names={["selNew", "selAdd", "selSub"]} /></div>
                    </div>
                </aside>
                <nav className="flex w-5 shrink-0 flex-col gap-1 bg-[#191919] pt-[5px]">
                    {["노드", "도구", "뷰", "그룹"].map((name) => (
                        <button
                            key={name}
                            className={clsx(
                                "flex w-[17px] items-center justify-center rounded-r-[4px] border border-l-0 border-[#3d3d3d] [text-orientation:sideways] [writing-mode:vertical-rl]",
                                name === "뷰" ? "h-[26px]" : "h-9",
                                name === "도구" ? "bg-[#303030] text-white" : "bg-[#1d1d1d] text-[#b0b0b0]",
                            )}
                        >
                            {name}
                        </button>
                    ))}
                </nav>
            </div>
        </section>
    );
}

function StatusBar() {
    return (
        <footer className="flex h-[19px] shrink-0 items-center bg-[#1d1d1d] pr-3 pl-[9px] text-[#989898]">
            {[
                { icon: "mouseLeft", name: "선택" },
                { icon: "mouseMid", name: "팬 뷰" },
                { icon: "mouseRight", name: "컨텍스트 메뉴" },
            ].map(({ icon, name }) => (
                <span key={icon} className="flex w-[211px] items-center gap-[9px]">
                    <Icon name={icon} className="size-4" />
                    {name}
                </span>
            ))}
            <span className="ml-auto">3.6.5</span>
        </footer>
    );
}

export default function App() {
    return (
        <div className="flex h-screen min-h-[900px] min-w-[1400px] flex-col border border-[#6b6e6e] bg-[#161616] text-[11px] leading-4 text-[#e6e6e6] [font-family:'DejaVu_Sans_Condensed','DejaVu_Sans','Noto_Sans_CJK_KR',sans-serif]">
            <TitleBar />
            <TopBar />
            <main className="flex min-h-0 flex-1 gap-[3px] px-px pb-[2px]">
                <div className="grid min-w-0 flex-1 grid-cols-[682fr_897fr] grid-rows-[915fr_1114fr] gap-[3px]">
                    <Spreadsheet />
                    <Viewport />
                    <NodeEditor />
                </div>
                <div className="flex w-[331px] shrink-0 flex-col gap-1">
                    <Outliner />
                    <Properties />
                </div>
            </main>
            <StatusBar />
        </div>
    );
}
